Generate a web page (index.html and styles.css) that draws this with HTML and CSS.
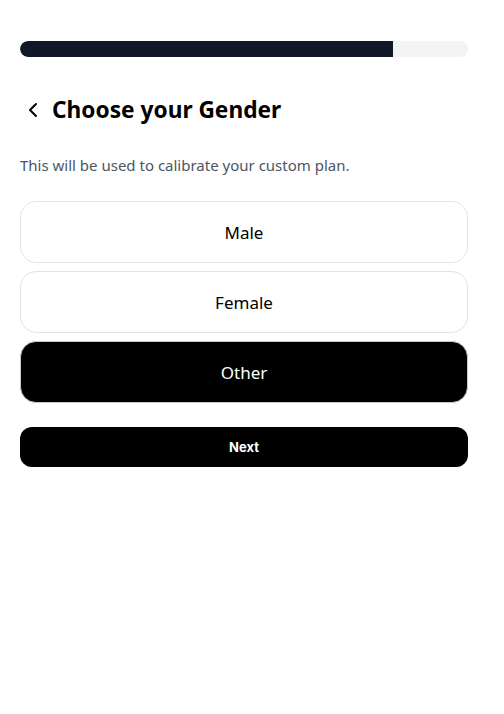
FILE: index.html
```html
<!DOCTYPE html>
<html>
<head>
<meta charset="utf-8">
<link rel="stylesheet" href="styles.css">
</head>
<body>
<div class="page">
  <div class="progress"><div class="progress-fill" style="width:83.3%"></div></div>
  <div class="header">
    <svg class="back" width="14" height="16" viewBox="0 0 14 16"><path d="M10 2 L4 8 L10 14" fill="none" stroke="#000" stroke-width="2" stroke-linecap="round" stroke-linejoin="round"/></svg>
    <h1 class="title">Choose your Gender</h1>
  </div>
  <p class="subtitle">This will be used to calibrate your custom plan.</p>
  <div class="options">
    <div class="option">Male</div>
    <div class="option">Female</div>
    <div class="option selected">Other</div>
  </div>
  <button class="next">Next</button>
</div>
</body>
</html>
```
FILE: styles.css
```css
* { box-sizing: border-box; }
html, body { margin: 0; padding: 0; background: #fff; }
body { font-family: "Noto Sans", "Open Sans", sans-serif; }
.page { padding: 41px 36px 0 20px; display: flex; flex-direction: column; }
.progress { height: 16px; background: #f3f3f1; border-radius: 8px; overflow: hidden; }
.progress-fill { height: 100%; background: #111827; border-radius: 8px 0 0 8px; }
.header { display: flex; align-items: center; margin-top: 39px; height: 28px; }
.back { margin-left: 6px; margin-right: 12px; }
.title { margin: 0; font-size: 22.7px; font-weight: 700; color: #000; line-height: 28px; }
.subtitle { margin: 31px 0 0; font-size: 15px; color: #4b5563; line-height: 20px; }
.options { display: flex; flex-direction: column; gap: 8px; margin-top: 26px; }
.option { height: 62px; border: 1px solid #e3e3e3; border-radius: 16px; display: flex; align-items: center; justify-content: center; font-size: 17px; color: #000; }
.option.selected { background: #000; color: #fff; border-color: #c8c8c8; }
.next { margin-top: 24px; height: 40px; border: none; border-radius: 12px; background: #000; color: #fff; font-family: Inter, "Noto Sans", sans-serif; font-weight: 700; font-size: 13px; }
```
